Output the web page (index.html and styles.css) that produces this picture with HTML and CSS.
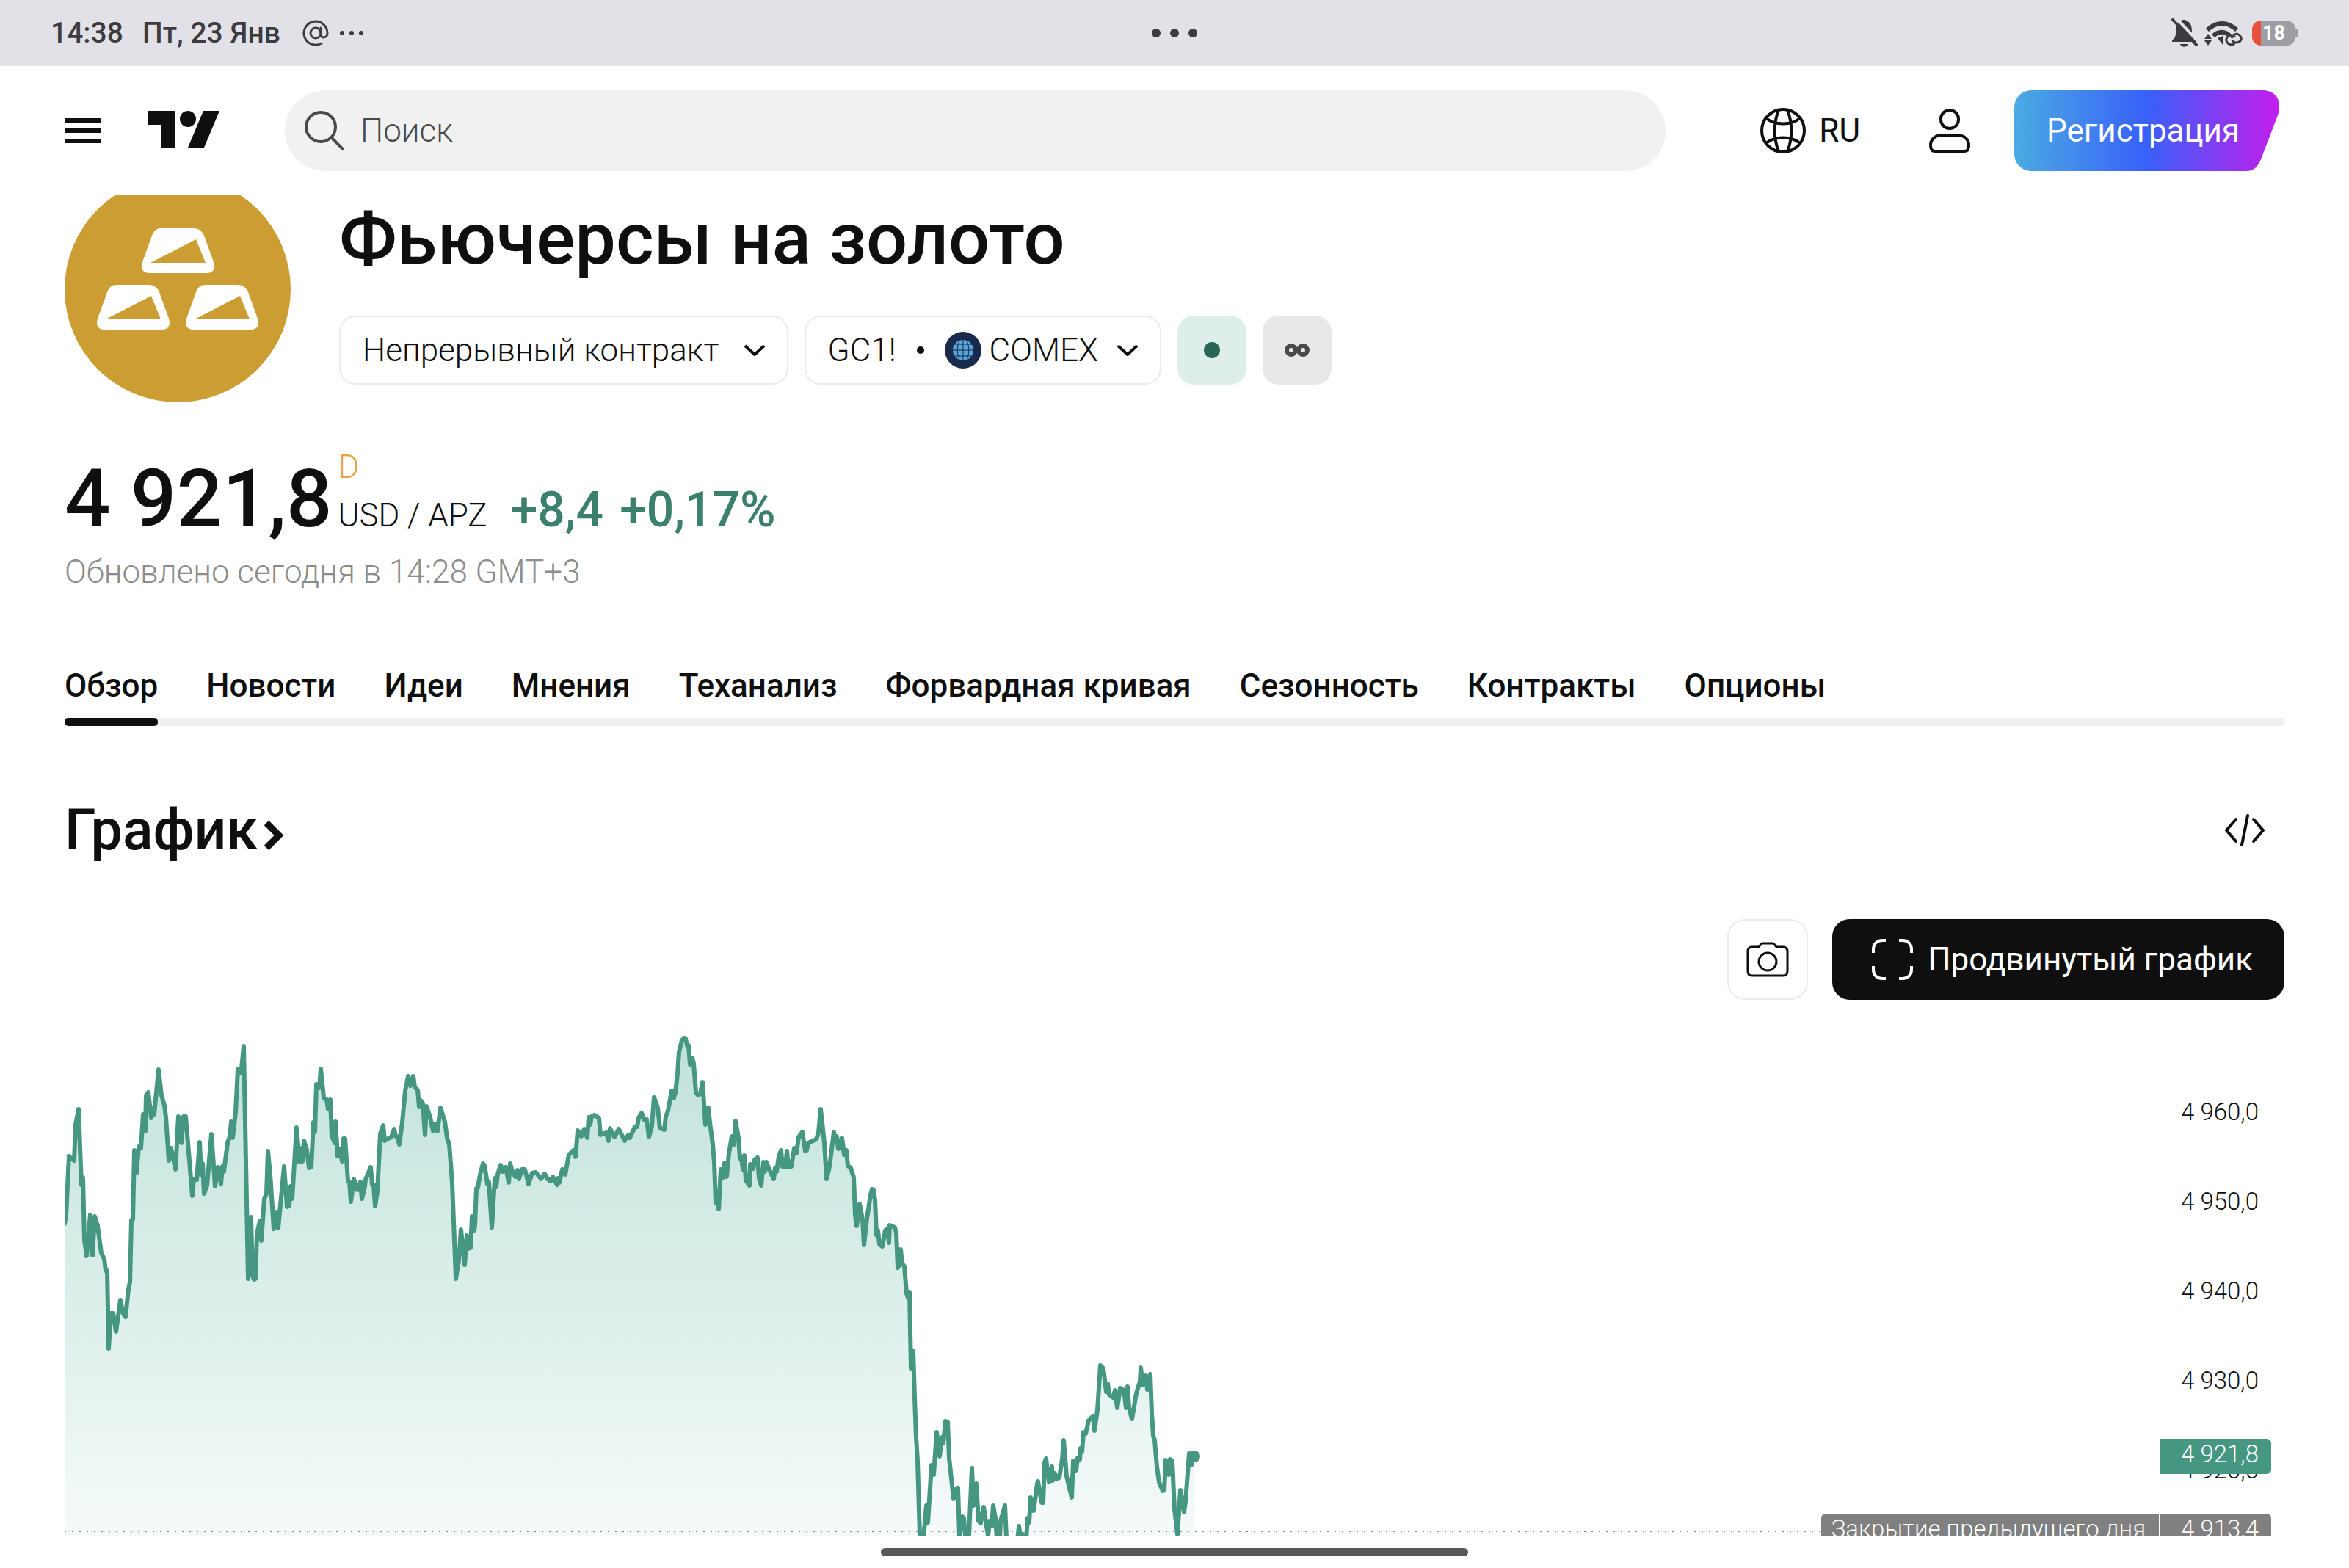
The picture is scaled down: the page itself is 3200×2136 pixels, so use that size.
FILE: index.html
```html
<!DOCTYPE html>
<html lang="ru">

<head>
    <meta charset="utf-8">
    <meta name="viewport" content="width=device-width, initial-scale=1.0">
    <title>Фьючерсы на золото</title>
    <link rel="stylesheet" href="styles.css">
</head>

<body>
    <div class="statusbar">
        <div class="status_left">
            <span>14:38</span>
            <span>Пт, 23 Янв</span>
            <span class="status_icons">
                <svg width="36" height="36" viewBox="0 0 36 36" fill="none" stroke="#3c3c3e" stroke-width="3" stroke-linecap="round">
                    <circle cx="18" cy="18" r="7" />
                    <path d="M25 11v9c0 6 9 5 9-2a16 16 0 1 0-8 14" />
                </svg>
                <svg width="34" height="8" viewBox="0 0 34 8" fill="#3c3c3e">
                    <circle cx="4" cy="4" r="3" />
                    <circle cx="17" cy="4" r="3" />
                    <circle cx="30" cy="4" r="3" />
                </svg>
            </span>
        </div>
        <svg class="status_dots" width="62" height="12" viewBox="0 0 62 12" fill="#3c3c3e">
            <circle cx="6" cy="6" r="6" />
            <circle cx="31" cy="6" r="6" />
            <circle cx="56" cy="6" r="6" />
        </svg>
        <div class="status_right">
            <svg width="36" height="40" viewBox="0 0 36 40">
                <path d="M1 32v-2c4-3 5-6 5-11 0-9 3-14 7-15 2-3 6-3 8 0 5 1 7 6 7 15 0 5 1 8 5 11v2z" fill="#3c3c3e" />
                <path d="M12 35h11c-1 5-10 5-11 0z" fill="#3c3c3e" />
                <path d="M5-2l32 34" stroke="#e3e1e8" stroke-width="4" />
                <path d="M2 2l32 34" stroke="#3c3c3e" stroke-width="4" stroke-linecap="round" />
            </svg>
            <svg width="52" height="40" viewBox="0 0 52 40" fill="none" stroke="#3c3c3e">
                <path d="M4 16c12-12 28-12 40 0" stroke-width="6" />
                <path d="M12 24c7-7 16-7 23 0" stroke-width="6" />
                <path d="M0 28l5-7 5 7zM0 30l5 7 5-7z" fill="#3c3c3e" stroke="none" />
                <path d="M18 27l7-3v12z" fill="#3c3c3e" stroke="none" />
                <path d="M42 32c-2 5-6 5-10 2-4-4-2-8 1-10 4-2 7-1 9 2M37 27c2-6 7-7 11-4 4 4 2 8-1 9-4 2-7 1-9-2" stroke-width="3" />
            </svg>
            <span class="battery">18</span>
        </div>
    </div>

    <header class="topbar">
        <button class="icon_button menu" aria-label="Меню">
            <svg width="50" height="34" viewBox="0 0 50 34" fill="#0f0f0f">
                <path d="M0 0h50v6H0zM0 14h50v6H0zM0 28h50v6H0z" />
            </svg>
        </button>
        <a class="logo" href="#" aria-label="На главную">
            <svg width="98" height="50" viewBox="0 0 98 50" fill="#0f0f0f">
                <path d="M0 0h38v50H19V19H0z" />
                <circle cx="55" cy="11" r="11" />
                <path d="M76 0h22L77 50H55z" />
            </svg>
        </a>
        <label class="search">
            <svg width="54" height="54" viewBox="0 0 54 54" fill="none" stroke="#4a4a4a" stroke-width="4">
                <circle cx="22" cy="22" r="20" />
                <path d="M37 37l16 16" />
            </svg>
            <input type="text" placeholder="Поиск" aria-label="Поиск">
        </label>
        <button class="icon_button lang">
            <svg width="62" height="62" viewBox="0 0 62 62" fill="none" stroke="#0f0f0f" stroke-width="4">
                <circle cx="31" cy="31" r="29" />
                <path d="M25 3c-7 17-7 39 0 56M37 3c7 17 7 39 0 56M8 14c12 10 34 10 46 0M8 48c12-10 34-10 46 0" />
            </svg>
            RU
        </button>
        <button class="icon_button user" aria-label="Профиль">
            <svg width="56" height="60" viewBox="0 0 56 60" fill="none" stroke="#0f0f0f" stroke-width="4">
                <rect x="16" y="2" width="24" height="25" rx="12" />
                <path d="M18 36h20c10 0 16 6 16 14 0 5-2 8-6 8H8c-4 0-6-3-6-8 0-8 6-14 16-14z" />
            </svg>
        </button>
        <button class="signup">
            <svg viewBox="0 0 362 110" preserveAspectRatio="none">
                <defs>
                    <linearGradient id="signup_fill">
                        <stop offset="0" stop-color="#4cabe3" />
                        <stop offset="0.5" stop-color="#3860f8" />
                        <stop offset="1" stop-color="#c31eec" />
                    </linearGradient>
                </defs>
                <path d="M24 0h314c20 0 27 16 21 34l-23 60c-4 10-10 16-20 16H24C10 110 0 100 0 86V24C0 10 10 0 24 0z" fill="url(#signup_fill)" />
            </svg>
            <span>Регистрация</span>
        </button>
    </header>

    <main>
        <section class="symbol">
            <svg class="symbol_logo" width="308" height="308" viewBox="0 0 308 308">
                <defs>
                    <g id="bar">
                        <path d="M27 0h43c7 0 12 3 15 10l13 36c3 9-1 15-9 15H10C2 61-2 55 1 46l13-36C17 3 20 0 27 0z" fill="#fff" />
                        <path d="M12 47l62-32 13 32z" fill="#cb9d32" />
                    </g>
                </defs>
                <circle cx="154" cy="154" r="154" fill="#cb9d32" />
                <use href="#bar" x="105" y="71" />
                <use href="#bar" x="44" y="148" />
                <use href="#bar" x="165" y="148" />
            </svg>
            <div class="symbol_info">
                <h1>Фьючерсы на золото</h1>
                <div class="pills">
                    <button class="pill">
                        Непрерывный контракт
                        <svg class="chevron" width="28" height="16" viewBox="0 0 28 16" fill="none" stroke="#0f0f0f" stroke-width="4">
                            <path d="M1 2l13 12L27 2" />
                        </svg>
                    </button>
                    <button class="pill pill_exchange">
                        GC1!
                        <span class="bullet"></span>
                        <svg class="exchange" width="50" height="50" viewBox="0 0 50 50">
                            <circle cx="25" cy="25" r="25" fill="#192a4d" />
                            <circle cx="25" cy="25" r="14" fill="#56a5dc" />
                            <path d="M10 17h30M10 25h30M10 33h30M25 10v30M21 10c-5 9-5 21 0 30M29 10c5 9 5 21 0 30" fill="none" stroke="#192a4d" />
                        </svg>
                        COMEX
                        <svg class="chevron" width="28" height="16" viewBox="0 0 28 16" fill="none" stroke="#0f0f0f" stroke-width="4">
                            <path d="M1 2l13 12L27 2" />
                        </svg>
                    </button>
                    <button class="badge badge_open" aria-label="Рынок открыт">
                        <svg width="22" height="22" viewBox="0 0 22 22">
                            <circle cx="11" cy="11" r="11" fill="#2a6657" />
                        </svg>
                    </button>
                    <button class="badge badge_inf" aria-label="Непрерывный">
                        <svg width="34" height="18" viewBox="0 0 34 18" fill="none" stroke="#4a4a4a" stroke-width="6">
                            <circle cx="9" cy="9" r="6" />
                            <circle cx="25" cy="9" r="6" />
                            <path d="M13 9h8" stroke-width="8" />
                        </svg>
                    </button>
                </div>
            </div>
        </section>

        <section class="quote">
            <div class="quote_row">
                <span class="price">4 921,8</span>
                <span class="units">
                    <span class="delay">D</span>
                    <span>USD / APZ</span>
                </span>
                <span class="change">+8,4</span>
                <span class="change">+0,17%</span>
            </div>
            <p class="updated">Обновлено сегодня в 14:28 GMT+3</p>
        </section>

        <nav class="tabs">
            <a class="tab valgt" href="#">Обзор</a>
            <a class="tab" href="#">Новости</a>
            <a class="tab" href="#">Идеи</a>
            <a class="tab" href="#">Мнения</a>
            <a class="tab" href="#">Теханализ</a>
            <a class="tab" href="#">Форвардная кривая</a>
            <a class="tab" href="#">Сезонность</a>
            <a class="tab" href="#">Контракты</a>
            <a class="tab" href="#">Опционы</a>
        </nav>

        <section class="chart_section">
            <div class="chart_head">
                <h2>
                    <a href="#">График
                        <svg width="28" height="44" viewBox="0 0 28 44" fill="none" stroke="#0f0f0f" stroke-width="9">
                            <path d="M4 5l17 17L4 39" />
                        </svg>
                    </a>
                </h2>
                <button class="icon_button embed" aria-label="Код для вставки">
                    <svg width="54" height="44" viewBox="0 0 54 44" fill="none" stroke="#0f0f0f" stroke-width="4" stroke-linecap="round" stroke-linejoin="round">
                        <path d="M15 7L2 22l13 15M39 7l13 15-13 15M31 2l-8 40" />
                    </svg>
                </button>
            </div>

            <div class="chart_tools">
                <button class="snapshot" aria-label="Снимок">
                    <svg width="58" height="48" viewBox="0 0 58 48" fill="none" stroke="#0f0f0f" stroke-width="3">
                        <path d="M8 7h8c3 0 3-5 6-5h14c3 0 3 5 6 5h8c4 0 6 2 6 6v27c0 4-2 6-6 6H8c-4 0-6-2-6-6V13c0-4 2-6 6-6z" />
                        <circle cx="29" cy="27" r="12" />
                    </svg>
                </button>
                <button class="advanced">
                    <svg width="56" height="56" viewBox="0 0 56 56" fill="none" stroke="#fff" stroke-width="4">
                        <path d="M2 19v-5C2 7 7 2 14 2h5M37 2h5c7 0 12 5 12 12v5M54 37v5c0 7-5 12-12 12h-5M19 54h-5C7 54 2 49 2 42v-5" />
                    </svg>
                    Продвинутый график
                </button>
            </div>

            <div class="chart">
                <svg class="chart_plot" viewBox="0 0 3024 712" preserveAspectRatio="none">
                    <defs>
                        <linearGradient id="area_fill" gradientUnits="userSpaceOnUse" x1="0" y1="30" x2="0" y2="760">
                            <stop offset="0" stop-color="#c0e2da" />
                            <stop offset="1" stop-color="#f9fcfc" />
                        </linearGradient>
                    </defs>
                    <polygon id="area" fill="url(#area_fill)" />
                    <path d="M0 706H2391" stroke="#808080" stroke-width="2" stroke-dasharray="2 8" />
                    <polyline id="line" fill="none" stroke="#459782" stroke-width="6" stroke-linejoin="round" stroke-linecap="round" />
                    <circle cx="1539" cy="604" r="8" fill="#459782" />
                </svg>
                <ul class="scale">
                    <li>4 960,0</li>
                    <li>4 950,0</li>
                    <li>4 940,0</li>
                    <li>4 930,0</li>
                    <li>4 920,0</li>
                </ul>
                <span class="tag tag_last">4 921,8</span>
                <div class="tag_close">
                    <span class="tag_title">Закрытие предыдущего дня</span>
                    <span class="tag">4 913,4</span>
                </div>
            </div>
        </section>
    </main>

    <footer class="gesture">
        <div class="gesture_bar"></div>
    </footer>

    <script src="chart.js"></script>
</body>

</html>
```
FILE: styles.css
```css
* {
    box-sizing: border-box;
    margin: 0;
    padding: 0;
}

body {
    display: flex;
    flex-direction: column;
    height: 100vh;
    overflow: hidden;
    background-color: white;
    color: #0f0f0f;
    font-family: Roboto, sans-serif;
    font-size: 44px;
    font-weight: 300;
    line-height: 52px;
}

button,
input {
    font: inherit;
    color: inherit;
    border: none;
    background: none;
}

button {
    cursor: pointer;
}

a {
    color: inherit;
    text-decoration: none;
}

svg {
    display: block;
    flex: none;
}

/* status bar */

.statusbar {
    flex: none;
    display: grid;
    grid-template-columns: 1fr auto 1fr;
    align-items: center;
    height: 90px;
    padding: 0 69px;
    background-color: #e3e1e8;
    color: #3c3c3e;
    font-size: 39px;
    font-weight: 500;
}

.status_left,
.status_icons,
.status_right {
    display: flex;
    align-items: center;
}

.status_left {
    gap: 26px;
}

.status_icons {
    gap: 14px;
    padding-left: 4px;
}

.status_right {
    justify-content: flex-end;
    gap: 9px;
}

.battery {
    position: relative;
    width: 59px;
    height: 34px;
    margin: 0 4px;
    border-radius: 12px;
    background: linear-gradient(to right, #ea4e3d 12px, #9e9da3 12px);
    color: white;
    font-size: 27px;
    font-weight: 700;
    line-height: 34px;
    text-align: center;
}

.battery::after {
    content: "";
    position: absolute;
    top: 11px;
    right: -4px;
    width: 6px;
    height: 12px;
    border-radius: 0 4px 4px 0;
    background-color: #9e9da3;
}

/* top bar */

.topbar {
    flex: none;
    display: flex;
    align-items: center;
    height: 176px;
    padding: 0 94px 0 88px;
}

.icon_button {
    display: flex;
    align-items: center;
}

.logo {
    margin: 0 89px 4px 63px;
}

.search {
    flex: 1;
    display: flex;
    align-items: center;
    gap: 22px;
    height: 110px;
    padding: 0 27px;
    border-radius: 55px;
    background-color: #f1f1f1;
}

.search input {
    flex: 1;
    outline: none;
}

.search input::placeholder {
    color: #4a4a4a;
    opacity: 1;
}

.lang {
    gap: 18px;
    margin-left: 129px;
    font-weight: 400;
}

.user {
    margin: 0 60px 0 94px;
}

.signup {
    position: relative;
    width: 362px;
    height: 110px;
    padding: 0 56px 0 44px;
    color: white;
    font-weight: 400;
}

.signup svg {
    position: absolute;
    inset: 0;
    width: 100%;
    height: 100%;
}

.signup span {
    position: relative;
}

/* page */

main {
    flex: 1;
    min-height: 0;
    overflow: hidden;
    padding: 0 88px;
}

.symbol {
    display: flex;
    gap: 66px;
    margin-top: -26px;
}

.symbol_info {
    padding-top: 28px;
}

h1 {
    font-size: 99px;
    font-weight: 500;
    line-height: 114px;
}

.pills {
    display: flex;
    gap: 22px;
    margin-top: 48px;
}

.pill {
    display: flex;
    align-items: center;
    height: 94px;
    padding: 0 30px;
    border: 2px solid #ebebeb;
    border-radius: 22px;
}

.chevron {
    margin-left: 34px;
}

.pill_exchange .chevron {
    margin-left: 26px;
}

.bullet {
    width: 10px;
    height: 10px;
    margin: 0 28px;
    border-radius: 50%;
    background-color: #0f0f0f;
}

.exchange {
    margin-right: 11px;
}

.badge {
    display: flex;
    align-items: center;
    justify-content: center;
    width: 94px;
    height: 94px;
    border-radius: 22px;
}

.badge_open {
    background-color: #deefeb;
}

.badge_inf {
    background-color: #e8e8e8;
}

/* price */

.quote {
    margin-top: 66px;
}

.quote_row {
    display: flex;
    align-items: last baseline;
    height: 132px;
}

.price {
    font-size: 110px;
    font-weight: 500;
    line-height: 132px;
}

.units {
    display: flex;
    flex-direction: column;
    gap: 14px;
    margin: 0 32px 0 8px;
}

.delay {
    color: #e8a33d;
}

.change {
    margin-right: 22px;
    color: #3a806c;
    font-size: 66px;
    font-weight: 500;
}

.updated {
    margin-top: 7px;
    color: #8c8c8c;
}

/* tabs */

.tabs {
    display: flex;
    gap: 66px;
    margin-top: 103px;
    background: linear-gradient(#f0f0f0, #f0f0f0) bottom / 100% 11px no-repeat;
    border-radius: 6px;
    font-weight: 500;
}

.tab {
    padding-bottom: 29px;
}

.tab.valgt {
    padding-bottom: 0;
}

.tab.valgt::after {
    content: "";
    display: block;
    height: 11px;
    margin-top: 18px;
    border-radius: 5px;
    background-color: #0f0f0f;
}

/* chart */

.chart_head,
.chart_tools {
    display: flex;
    align-items: center;
}

.chart_head {
    justify-content: space-between;
    margin-top: 96px;
    padding-right: 27px;
}

h2 {
    font-size: 77px;
    font-weight: 500;
    line-height: 92px;
}

h2 a {
    display: flex;
    align-items: center;
    gap: 8px;
}

h2 svg {
    margin-top: 14px;
}

.chart_tools {
    justify-content: flex-end;
    gap: 33px;
    margin-top: 75px;
}

.snapshot,
.advanced {
    display: flex;
    align-items: center;
    justify-content: center;
    height: 110px;
    border-radius: 24px;
}

.snapshot {
    width: 110px;
    border: 2px solid #ebebeb;
}

.advanced {
    gap: 20px;
    padding: 0 43px 0 54px;
    background-color: #0f0f0f;
    color: white;
    font-weight: 400;
}

.chart {
    position: relative;
    height: 760px;
    margin-top: 18px;
    font-size: 33px;
    line-height: 42px;
}

.chart_plot {
    width: 100%;
    height: 712px;
}

.scale {
    position: absolute;
    top: 114px;
    right: 35px;
    display: flex;
    flex-direction: column;
    gap: 80px;
    list-style: none;
}

.tag {
    height: 48px;
    padding: 0 17px 0 28px;
    border-radius: 0 6px 6px 0;
    color: white;
}

.tag_last {
    position: absolute;
    top: 580px;
    right: 18px;
    background-color: #459782;
}

.tag_close {
    position: absolute;
    top: 682px;
    right: 18px;
    display: flex;
    gap: 2px;
    color: white;
}

.tag_close span {
    height: 48px;
    background-color: #808080;
}

.tag_title {
    padding: 0 18px 0 14px;
    border-radius: 6px 0 0 6px;
}

/* gesture strip */

.gesture {
    flex: none;
    display: flex;
    justify-content: center;
    height: 44px;
    padding-top: 17px;
}

.gesture_bar {
    width: 25%;
    height: 11px;
    border-radius: 6px;
    background-color: #595959;
}
```
FILE: chart.js
```js
const points = `0,287 2,275 6,195 13,201 15,152 19,131 23,234 25,224 27,309 30,331 35,275 38,330 41,277 45,290 50,327 54,335
56,351 58,351 60,457 63,409 66,409 70,434 76,391 80,410 83,414 87,376 89,367 91,282 93,281 95,187 98,218 101,182 104,184
107,138 110,161 111,112 114,108 118,143 120,129 122,138 128,77 132,112 136,126 138,142 142,201 145,184 151,213 155,141
159,177 162,141 165,141 174,249 176,227 180,227 184,176 186,220 188,205 190,246 194,235 200,165 205,236 209,210 213,233
215,209 217,216 222,177 225,168 227,148 229,170 233,135 236,76 239,82 241,76 244,45 250,362 254,278 256,358 258,363
260,362 262,301 266,283 268,310 272,253 275,246 277,188 280,220 285,294 289,271 291,293 299,209 303,264 306,263 308,236
310,253 316,156 320,203 323,184 324,202 326,174 330,186 333,211 336,210 339,149 341,162 343,97 347,102 349,76 353,115
357,118 359,131 362,118 364,168 368,177 369,148 372,195 375,185 378,202 380,171 382,171 386,228 388,230 390,257 394,226
399,241 403,230 405,253 409,236 410,227 417,210 419,233 421,234 423,263 426,243 430,165 434,153 436,174 439,172 445,169
449,158 451,168 453,168 456,179 460,149 464,106 468,86 471,99 475,86 477,101 481,105 483,128 485,119 488,123 491,166
493,127 498,142 502,161 504,151 508,161 512,129 518,148 521,170 524,179 527,218 528,232 533,362 537,337 540,295 545,343
548,303 550,321 553,320 555,277 558,296 559,289 561,239 563,238 566,220 570,205 572,207 576,233 578,230 582,292 586,225
588,237 590,220 594,207 597,216 601,210 605,231 607,205 610,216 614,223 617,214 619,226 623,213 627,213 632,233 637,218
642,217 649,226 654,219 658,226 662,229 665,223 671,234 672,225 674,231 678,213 682,220 687,193 693,187 696,196 699,160
704,168 708,158 712,170 714,142 716,152 718,141 722,139 728,143 730,166 738,163 741,174 743,157 749,169 755,158 763,174
768,166 770,170 777,155 780,155 782,143 786,136 789,145 793,145 796,169 800,154 803,115 808,129 811,157 817,159 819,141
822,133 827,106 830,116 832,108 835,83 837,53 841,37 844,34 846,35 848,44 850,44 852,70 855,61 857,69 860,108 863,112
866,110 869,94 873,152 877,129 879,149 883,179 885,204 887,259 889,250 891,267 894,213 896,225 899,204 902,223 905,191
909,168 912,179 914,147 918,170 920,198 922,197 924,213 926,194 928,228 933,235 934,206 938,212 940,200 944,197 946,225
949,235 952,203 954,216 956,203 960,213 966,226 968,211 970,216 973,195 976,187 978,209 982,210 984,188 986,210 990,209
994,184 997,191 1000,169 1005,162 1009,188 1011,187 1013,177 1024,172 1027,163 1030,131 1033,158 1035,177 1038,226
1042,209 1048,162 1050,174 1052,168 1054,185 1059,170 1062,193 1065,187 1067,208 1071,211 1075,224 1077,275 1079,290
1083,260 1087,281 1089,316 1093,280 1098,248 1100,240 1102,241 1104,255 1106,302 1108,296 1110,315 1114,318 1118,296
1121,294 1123,313 1124,289 1131,292 1133,300 1135,347 1137,345 1139,322 1141,341 1144,345 1147,382 1149,388 1151,380
1153,484 1156,460 1158,524 1160,578 1162,610 1165,712 1168,737 1171,704 1174,671 1176,694 1181,616 1184,629 1188,571
1192,604 1195,578 1197,586 1200,556 1203,557 1205,606 1211,662 1214,649 1217,647 1219,712 1223,686 1225,688 1229,737
1232,712 1236,620 1238,671 1242,641 1245,692 1248,695 1252,673 1258,712 1260,692 1263,699 1265,671 1268,688 1270,716
1274,716 1275,692 1281,671 1284,737 1297,729 1300,699 1302,712 1305,710 1308,729 1310,716 1312,688 1314,694 1316,660
1320,678 1325,641 1326,638 1331,667 1333,667 1335,612 1337,607 1341,639 1345,618 1346,637 1349,627 1351,635 1355,633
1359,608 1361,582 1365,631 1372,660 1374,610 1378,623 1380,606 1383,608 1384,593 1386,598 1388,571 1391,573 1395,555
1401,549 1403,569 1407,541 1411,480 1415,484 1419,516 1421,505 1423,520 1428,524 1431,514 1434,538 1438,511 1443,514
1446,538 1448,509 1450,537 1454,553 1460,518 1465,502 1466,483 1469,507 1473,494 1475,513 1479,492 1481,545 1483,576
1485,582 1488,618 1491,639 1496,651 1498,650 1500,609 1504,629 1506,608 1509,610 1512,676 1516,710 1520,650 1525,680
1527,665 1532,600 1535,616 1537,606 1539,604`;

document.querySelector("#line").setAttribute("points", points);
document.querySelector("#area").setAttribute("points", "0,760 " + points + " 1539,760");
```
